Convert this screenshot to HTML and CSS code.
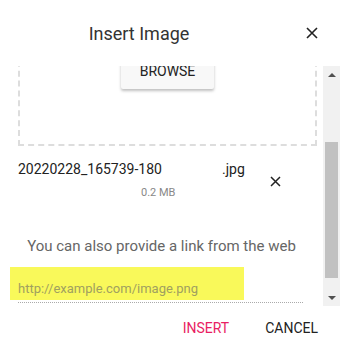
FILE: index.html
```html
<!DOCTYPE html>
<html lang="en">
<head>
    <meta charset="UTF-8">
    <title>Insert Image</title>
    <link rel="stylesheet" href="styles.css">
</head>
<body>
    <div class="dialog">
        <div class="header">
            <h1 class="title">Insert Image</h1>
            <button class="close" type="button" aria-label="Close">
                <svg width="12" height="12" viewBox="0 0 12 12"><path d="M1 1L11 11M11 1L1 11" stroke="#222" stroke-width="1.6" fill="none"/></svg>
            </button>
        </div>

        <div class="body">
            <div class="content">
                <div class="dropzone">
                    <button class="browse" type="button">BROWSE</button>
                </div>

                <div class="file">
                    <div class="file-info">
                        <div class="file-name">
                            <span class="name">20220228_165739-180</span>
                            <span class="ext">.jpg</span>
                        </div>
                        <div class="file-size">0.2 MB</div>
                    </div>
                    <button class="remove" type="button" aria-label="Remove">
                        <svg width="11" height="11" viewBox="0 0 11 11"><path d="M1 1L10 10M10 1L1 10" stroke="#222" stroke-width="1.5" fill="none"/></svg>
                    </button>
                </div>

                <p class="hint">You can also provide a link from the web</p>

                <div class="field">
                    <div class="highlight">
                        <span class="placeholder">http://example.com/image.png</span>
                    </div>
                </div>
            </div>

            <!-- fake scrollbar -->
            <div class="scrollbar">
                <div class="arrow"><span class="tri up"></span></div>
                <div class="track">
                    <div class="thumb"></div>
                </div>
                <div class="arrow"><span class="tri down"></span></div>
            </div>
        </div>

        <div class="footer">
            <button class="action primary" type="button">INSERT</button>
            <button class="action" type="button">CANCEL</button>
        </div>
    </div>
</body>
</html>
```

FILE: styles.css
```css
body {
    margin: 0;
    background-color: #fff;
    font-family: Roboto, 'Liberation Sans', Arial, sans-serif;
    color: #222;
}
button {
    font-family: inherit;
    border: none;
    background: none;
    padding: 0;
    cursor: pointer;
}
.dialog {
    width: 340px;
    height: 350px;
    display: flex;
    flex-direction: column;
}
.header {
    height: 66px;
    display: flex;
    align-items: center;
    flex-shrink: 0;
}
.title {
    flex: 1;
    margin: 0;
    padding-right: 10px;
    text-align: center;
    font-size: 18px;
    font-weight: 400;
    color: #333;
}
.close {
    width: 48px;
    height: 48px;
    margin-right: 4px;
    display: flex;
    align-items: center;
    justify-content: center;
}
.body {
    height: 240px;
    display: flex;
    flex-shrink: 0;
}
.content {
    width: 323px;
    overflow: hidden;
}
.dropzone {
    margin: -35px 6px 0 18px;
    border: 2px dashed #ddd;
    padding: 20px 0 55px;
    display: flex;
    justify-content: center;
}
.browse {
    width: 93px;
    height: 36px;
    background-color: #f8f8f8;
    font-size: 14px;
    font-weight: 400;
    color: #222;
    box-shadow: 0 2px 3px rgba(0, 0, 0, 0.25);
    border-radius: 2px;
}
.file {
    margin-top: 13px;
    display: flex;
    align-items: flex-start;
}
.file-info {
    padding-left: 18px;
}
.file-name {
    display: flex;
    font-size: 14px;
    line-height: 20px;
    color: #222;
}
.name {
    width: 204px;
}
.ext {
    width: 42px;
}
.file-size {
    margin-top: 7px;
    padding-left: 123px;
    font-size: 11px;
    line-height: 14px;
    color: #888;
}
.remove {
    margin-top: 11px;
    width: 22px;
    height: 22px;
    display: flex;
    align-items: center;
    justify-content: center;
}
.hint {
    margin: 36px 0 0;
    text-align: center;
    font-size: 15px;
    line-height: 20px;
    color: #666;
}
.field {
    margin: 11px 20px 0 18px;
    padding-bottom: 2px;
    border-bottom: 1px dotted #aaa;
}
.highlight {
    margin-left: -8px;
    width: 226px;
    height: 22px;
    padding: 11px 0 0 8px;
    background-color: #f9f95a;
}
.placeholder {
    font-size: 13px;
    line-height: 18px;
    color: #a0a060;
}
.scrollbar {
    width: 17px;
    display: flex;
    flex-direction: column;
    background-color: #f1f1f1;
}
.arrow {
    height: 17px;
    display: flex;
    align-items: center;
    justify-content: center;
}
.tri {
    width: 0;
    height: 0;
    border-left: 4px solid transparent;
    border-right: 4px solid transparent;
}
.tri.up {
    border-bottom: 4px solid #505050;
}
.tri.down {
    border-top: 4px solid #505050;
}
.track {
    flex: 1;
    padding: 59px 2px 0;
}
.thumb {
    height: 136px;
    background-color: #c1c1c1;
}
.footer {
    flex: 1;
    display: flex;
    align-items: center;
    justify-content: flex-end;
    gap: 20px;
    padding-right: 14px;
}
.action {
    padding: 0 8px;
    font-size: 14px;
    font-weight: 400;
    color: #222;
    line-height: 36px;
}
.action.primary {
    color: #e91e63;
}
```
